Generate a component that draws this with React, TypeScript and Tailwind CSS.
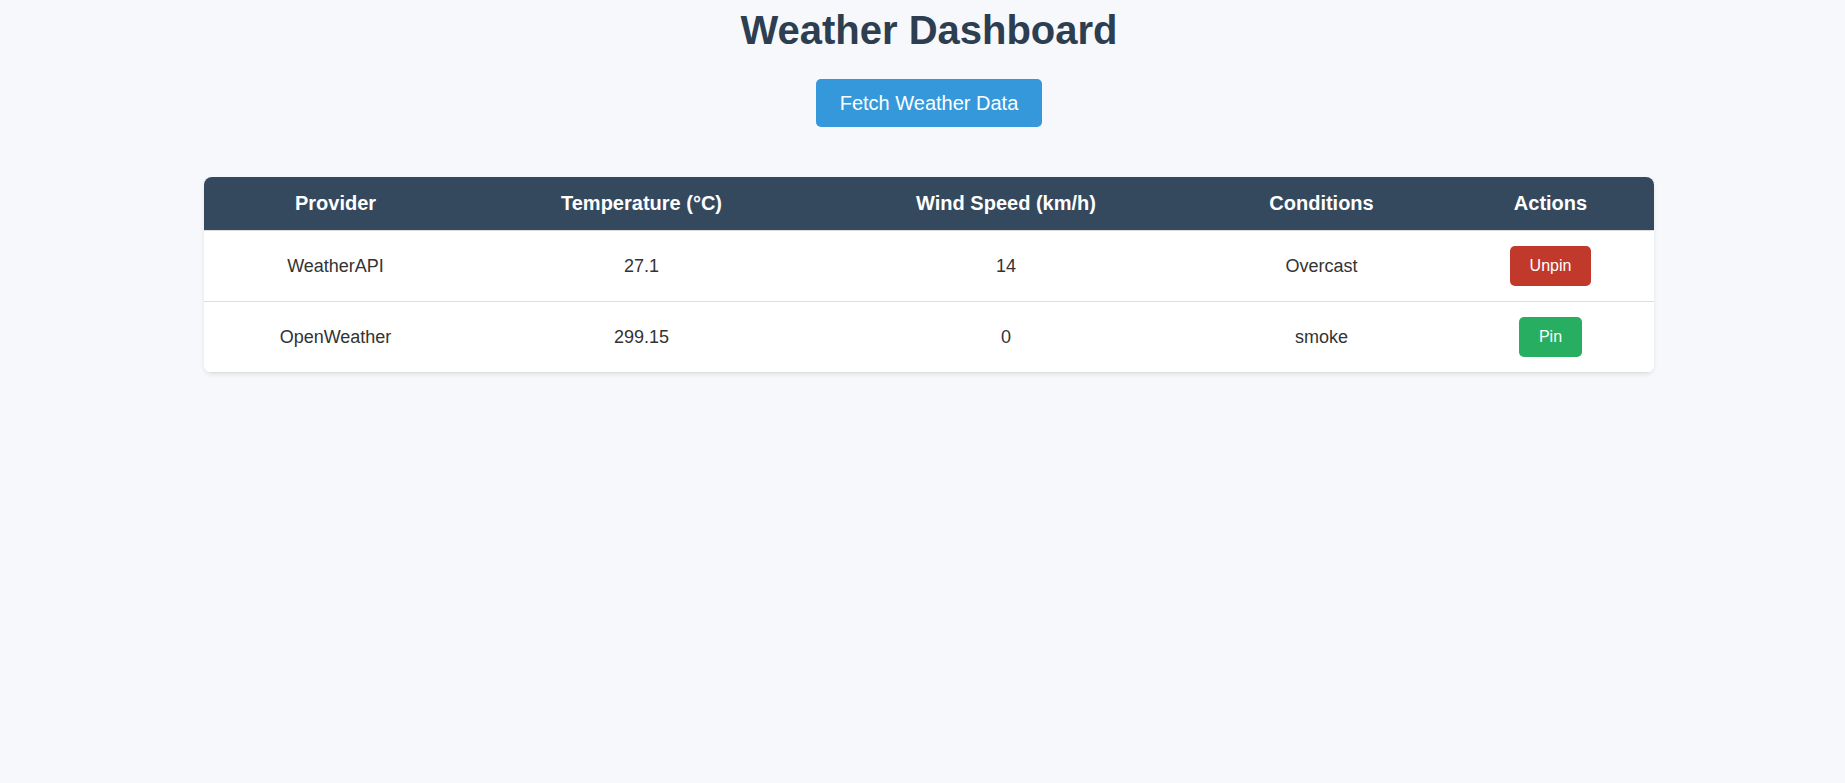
import { useState } from "react";

type Row = {
  provider: string;
  temperature: number;
  windSpeed: number;
  conditions: string;
  pinned: boolean;
};

const initialRows: Row[] = [
  { provider: "WeatherAPI", temperature: 27.1, windSpeed: 14, conditions: "Overcast", pinned: true },
  { provider: "OpenWeather", temperature: 299.15, windSpeed: 0, conditions: "smoke", pinned: false },
];

export default function App() {
  const [rows, setRows] = useState(initialRows);

  const togglePin = (provider: string) => {
    setRows((prev) =>
      prev.map((r) => (r.provider === provider ? { ...r, pinned: !r.pinned } : r)),
    );
  };

  return (
    <div className="min-h-screen bg-[#f7f8fc] pl-[13px] font-['Liberation_Sans',Arial,sans-serif] text-[#333]">
      <div className="flex flex-col items-center">
        <h1 className="m-0 text-[40px] font-bold leading-[60px] text-[#2c3e50]">
          Weather Dashboard
        </h1>
        <button className="mt-[19px] rounded-[5px] bg-[#3498db] px-6 py-3 text-[20px] leading-6 text-white">
          Fetch Weather Data
        </button>

        <div className="mt-[50px] w-[1450px] overflow-hidden rounded-lg bg-white shadow-[0_2px_4px_rgba(0,0,0,0.08)]">
          <table className="w-full table-fixed border-collapse text-center">
            <colgroup>
              <col className="w-[263px]" />
              <col className="w-[349px]" />
              <col className="w-[380px]" />
              <col className="w-[251px]" />
              <col className="w-[207px]" />
            </colgroup>
            <thead>
              <tr className="bg-[#34495e] text-[20px] font-bold leading-[23px] text-white">
                <th className="border-b border-[#dddddd] py-[15px]">Provider</th>
                <th className="border-b border-[#dddddd] py-[15px]">Temperature (°C)</th>
                <th className="border-b border-[#dddddd] py-[15px]">Wind Speed (km/h)</th>
                <th className="border-b border-[#dddddd] py-[15px]">Conditions</th>
                <th className="border-b border-[#dddddd] py-[15px]">Actions</th>
              </tr>
            </thead>
            <tbody className="text-[18px]">
              {rows.map((r) => (
                <tr key={r.provider} className="border-b border-[#dddddd]">
                  <td className="py-[15px]">{r.provider}</td>
                  <td className="py-[15px]">{r.temperature}</td>
                  <td className="py-[15px]">{r.windSpeed}</td>
                  <td className="py-[15px]">{r.conditions}</td>
                  <td className="py-[15px]">
                    <button
                      onClick={() => togglePin(r.provider)}
                      className={
                        r.pinned
                          ? "rounded-[5px] bg-[#c0392b] px-5 py-2 text-[16px] leading-6 text-white"
                          : "rounded-[5px] bg-[#27ae60] px-5 py-2 text-[16px] leading-6 text-white"
                      }
                    >
                      {r.pinned ? "Unpin" : "Pin"}
                    </button>
                  </td>
                </tr>
              ))}
            </tbody>
          </table>
        </div>
      </div>
    </div>
  );
}
